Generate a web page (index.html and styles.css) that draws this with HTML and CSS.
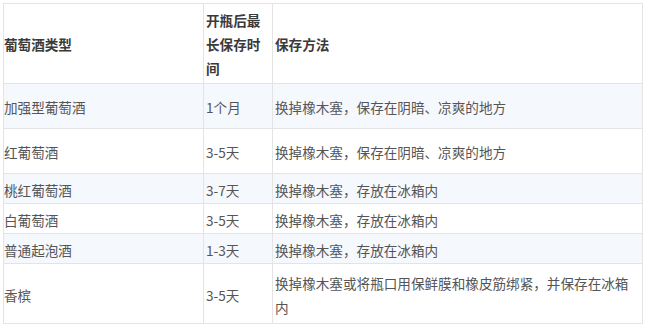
FILE: index.html
```html
<!DOCTYPE html>
<html lang="zh-CN">
<head>
<meta charset="utf-8">
<link rel="stylesheet" href="styles.css">
</head>
<body>
<table class="wine">
  <colgroup>
    <col class="c1"><col class="c2"><col class="c3">
  </colgroup>
  <thead>
    <tr class="head">
      <th>葡萄酒类型</th>
      <th>开瓶后最长保存时间</th>
      <th>保存方法</th>
    </tr>
  </thead>
  <tbody>
    <tr class="alt tall"><td>加强型葡萄酒</td><td>1个月</td><td>换掉橡木塞，保存在阴暗、凉爽的地方</td></tr>
    <tr class="tall"><td>红葡萄酒</td><td>3-5天</td><td>换掉橡木塞，保存在阴暗、凉爽的地方</td></tr>
    <tr class="alt short"><td>桃红葡萄酒</td><td>3-7天</td><td>换掉橡木塞，存放在冰箱内</td></tr>
    <tr class="short"><td>白葡萄酒</td><td>3-5天</td><td>换掉橡木塞，存放在冰箱内</td></tr>
    <tr class="alt short"><td>普通起泡酒</td><td>1-3天</td><td>换掉橡木塞，存放在冰箱内</td></tr>
    <tr class="last"><td>香槟</td><td>3-5天</td><td>换掉橡木塞或将瓶口用保鲜膜和橡皮筋绑紧，并保存在冰箱内</td></tr>
  </tbody>
</table>
</body>
</html>
```
FILE: styles.css
```css
html, body {
  margin: 0;
  padding: 0;
  background: #ffffff;
}
body {
  padding: 3px 0 0 3px;
  font-family: "Noto Sans CJK SC", "Noto Sans", sans-serif;
  font-size: 13.6px;
  color: #555555;
}
.wine {
  border-collapse: collapse;
  table-layout: fixed;
  width: 639px;
}
.c1 { width: 200px; }
.c2 { width: 69px; }
.c3 { width: 370px; }
.wine th, .wine td {
  border: 1px solid #e4e4e4;
  padding: 0 3px 0 2px;
  text-align: left;
  vertical-align: middle;
  line-height: 24px;
}
.wine th:first-child, .wine td:first-child {
  padding-left: 0;
}
.wine th {
  font-weight: bold;
  color: #3a3a3a;
  height: 78px;
  padding-top: 1px;
}
.wine td {
  padding-top: 2px;
}
.alt td { background: #f5f8fd; }
.tall td { height: 42px; }
.short td { height: 27px; }
.last td { height: 57px; }
```
